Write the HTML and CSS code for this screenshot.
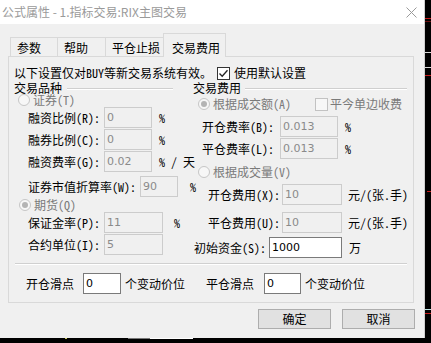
FILE: index.html
```html
<!DOCTYPE html>
<html lang="zh-CN">
<head>
<meta charset="utf-8">
<title>公式属性</title>
<link rel="stylesheet" href="styles.css">
</head>
<body>
<div class="screen">
  <div class="window">
    <div class="titlebar">
      <span class="title">公式属性 - 1.指标交易:RIX主图交易</span>
      <svg class="close" width="11" height="11" viewBox="0 0 11 11"><path d="M0.5 0.5 L10.5 10.5 M10.5 0.5 L0.5 10.5" stroke="#9a9a9a" stroke-width="1" fill="none"/></svg>
    </div>
    <div class="tabs">
      <div class="tab">参数</div>
      <div class="tab">帮助</div>
      <div class="tab">平仓止损</div>
      <div class="tab active">交易费用</div>
    </div>
    <div class="panel">
      <div class="notice">
        <span class="notice-text">以下设置仅对BUY等新交易系统有效。</span>
        <span class="check"><span class="cbox on"><svg width="11" height="11" viewBox="0 0 11 11"><path d="M1.5 5.5 L4.2 8.3 L9.5 2.2" stroke="#222" stroke-width="1.3" fill="none"/></svg></span>使用默认设置</span>
      </div>
      <div class="groups">
        <div class="col left">
          <div class="glabel"><span>交易品种</span><i class="gline gl-left"></i></div>
          <div class="rrow l-r1"><span class="radio"></span><span class="dis">证券(T)</span></div>
          <div class="field l-f1"><span class="lbl lw76">融资比例(R):</span><span class="inp w47">0</span><span class="unit u7">%</span></div>
          <div class="field l-f2"><span class="lbl lw76">融券比例(C):</span><span class="inp w47">0</span><span class="unit u7">%</span></div>
          <div class="field l-f2"><span class="lbl lw76">融资费率(G):</span><span class="inp w47">0.02</span><span class="unit u7">% / 天</span></div>
          <div class="field l-fw"><span class="lbl lw112">证券市值折算率(W):</span><span class="inp w38">90</span><span class="unit u12">%</span></div>
          <div class="rrow l-r2"><span class="radio sel"></span><span class="dis">期货(Q)</span></div>
          <div class="field l-f3"><span class="lbl lw76">保证金率(P):</span><span class="inp w59">11</span><span class="unit u11">%</span></div>
          <div class="field l-f2"><span class="lbl lw76">合约单位(I):</span><span class="inp w59">5</span></div>
        </div>
        <div class="col right">
          <div class="glabel"><span>交易费用</span><i class="gline gl-right"></i></div>
          <div class="rrow r-r1">
            <span class="ritem"><span class="radio sel"></span><span class="dis">根据成交额(A)</span></span>
            <span class="check"><span class="cbox"></span><span class="dis">平今单边收费</span></span>
          </div>
          <div class="field r-f1 p9"><span class="lbl lw78">开仓费率(B):</span><span class="inp w58">0.013</span><span class="unit u7">%</span></div>
          <div class="field r-f2 p9"><span class="lbl lw78">平仓费率(L):</span><span class="inp w58">0.013</span><span class="unit u7">%</span></div>
          <div class="rrow r-r2"><span class="ritem"><span class="radio"></span><span class="dis">根据成交量(V)</span></span></div>
          <div class="field r-f3 p15"><span class="lbl lw74">开仓费用(X):</span><span class="inp w60">10</span><span class="unit u6">元/(张.手)</span></div>
          <div class="field r-f4 p15"><span class="lbl lw74">平仓费用(U):</span><span class="inp w60">10</span><span class="unit u6">元/(张.手)</span></div>
          <div class="field r-f5 p1"><span class="lbl lw75">初始资金(S):</span><span class="inp on w73">1000</span><span class="unit u7">万</span></div>
        </div>
      </div>
      <div class="sep"></div>
      <div class="slip">
        <span class="lbl">开仓滑点</span><span class="inp on w38 s-in">0</span><span class="unit u4">个变动价位</span>
        <span class="lbl s-second">平仓滑点</span><span class="inp on w37 s-in2">0</span><span class="unit u4">个变动价位</span>
      </div>
    </div>
    <div class="buttons">
      <div class="btn">确定</div>
      <div class="btn">取消</div>
    </div>
  </div>
  <div class="edge">
    <i class="ln red e1"></i>
    <i class="ln dred e2"></i>
    <i class="ln wht e3"></i>
    <i class="ln wht e4"></i>
    <i class="ln red e5"></i>
    <i class="ln red e6"></i>
    <i class="ln wht e7"></i>
    <i class="ln red e8"></i>
  </div>
</div>
<div class="bottom">
  <i class="dot"></i>
  <i class="bline"></i>
</div>
</body>
</html>
```

FILE: styles.css
```css
html, body {
  margin: 0;
  padding: 0;
}
body {
  background: #000;
  width: 431px;
  height: 343px;
  overflow: hidden;
  font-family: "Noto Sans Mono CJK SC", "Noto Sans CJK SC", sans-serif;
  font-size: 12px;
  color: #000;
}
.screen {
  display: flex;
  height: 338px;
}
.window {
  width: 425px;
  height: 338px;
  box-sizing: border-box;
  background: #f0f0f0;
  border-right: 1px solid #cfcfcf;
  display: flex;
  flex-direction: column;
}
.titlebar {
  height: 24px;
  flex: none;
  background: #fff;
  display: flex;
  align-items: center;
  justify-content: space-between;
  padding: 0 7px 0 2px;
}
.title {
  font-family: "Noto Sans CJK SC", sans-serif;
  font-size: 12px;
  color: #9a9a9a;
  line-height: 16px;
}
.close {
  display: block;
}
.tabs {
  margin-top: 9px;
  height: 23px;
  display: flex;
  align-items: flex-end;
  padding-left: 10px;
}
.tab {
  box-sizing: border-box;
  min-width: 47px;
  height: 19px;
  padding: 2px 5px 0 6px;
  line-height: 16px;
  border: 1px solid #d9d9d9;
  border-bottom: none;
  border-right: none;
  background: #f0f0f0;
  white-space: nowrap;
}
.tab:nth-child(2) { min-width: 48px; }
.tab:nth-child(3) { min-width: 59px; }
.tab.active {
  position: relative;
  z-index: 1;
  height: 24px;
  margin: 0 -2px -1px -2px;
  padding: 6px 5px 0 8px;
  min-width: 63px;
  border-right: 1px solid #d9d9d9;
  background: #f0f0f0;
}
.panel {
  box-sizing: border-box;
  margin-left: 8px;
  width: 406px;
  height: 247px;
  border: 1px solid #d9d9d9;
  padding: 9px 0 0 5px;
  display: flex;
  flex-direction: column;
}
.notice {
  height: 14px;
  line-height: 12px;
  display: flex;
  align-items: center;
  white-space: nowrap;
}
.notice-text {
  width: 203px;
  flex: none;
}
.check {
  display: flex;
  align-items: center;
  white-space: nowrap;
}
.cbox {
  box-sizing: border-box;
  width: 13px;
  height: 13px;
  border: 1px solid #c2c2c2;
  background: #f7f7f7;
  margin-right: 2px;
  display: flex;
  align-items: center;
  justify-content: center;
  flex: none;
}
.cbox.on {
  border-color: #333;
  background: #fff;
  margin-right: 4px;
}
.groups {
  margin-top: 1px;
  height: 182px;
  display: flex;
  flex: none;
}
.col {
  display: flex;
  flex-direction: column;
}
.col.left { width: 179px; }
.col.right { width: 214px; }
.glabel {
  height: 14px;
  line-height: 12px;
  display: flex;
  align-items: center;
  white-space: nowrap;
}
.gline {
  display: block;
  height: 0;
  border-top: 1px solid #cfcfcf;
  border-bottom: 1px solid #fff;
  margin-left: 5px;
  margin-top: 2px;
}
.gl-left { width: 106px; }
.gl-right { flex: 1; margin-left: 4px; }
.rrow {
  height: 14px;
  line-height: 12px;
  display: flex;
  align-items: center;
  white-space: nowrap;
}
.ritem {
  display: flex;
  align-items: center;
  width: 117px;
  flex: none;
}
.radio {
  box-sizing: border-box;
  width: 12px;
  height: 12px;
  border-radius: 50%;
  border: 1px solid #c6c6c6;
  background: #f7f7f7;
  margin-right: 3px;
  display: flex;
  align-items: center;
  justify-content: center;
  flex: none;
}
.radio.sel::after {
  content: "";
  width: 6px;
  height: 6px;
  border-radius: 50%;
  background: #b4b4b4;
}
.dis { color: #7a7a7a; }
.l-r1 { margin-top: -2px; padding-left: 4px; }
.l-r2 { margin-top: 1px; padding-left: 5px; }
.r-r1 { margin-top: 2px; padding-left: 5px; }
.r-r2 { margin-top: 6px; padding-left: 5px; }
.field {
  height: 21px;
  line-height: 14px;
  display: flex;
  align-items: center;
  white-space: nowrap;
}
.left .field { padding-left: 14px; }
.l-f1 { margin-top: 0; }
.l-f2 { margin-top: 1px; }
.l-fw { margin-top: 4px; }
.l-f3 { margin-top: 0; }
.r-f1 { margin-top: 5px; }
.r-f2 { margin-top: 1px; }
.r-f3 { margin-top: 5px; }
.r-f4 { margin-top: 7px; }
.r-f5 { margin-top: 4px; }
.p1 { padding-left: 1px; }
.p9 { padding-left: 9px; }
.p15 { padding-left: 15px; }
.lbl { flex: none; white-space: nowrap; }
.lw74 { width: 74px; }
.lw75 { width: 75px; }
.lw76 { width: 76px; }
.lw78 { width: 78px; }
.lw112 { width: 112px; }
.inp {
  box-sizing: border-box;
  height: 21px;
  border: 1px solid #cccccc;
  background: #f0f0f0;
  color: #8a8a8a;
  padding-left: 2px;
  line-height: 19px;
  flex: none;
  font-family: "DejaVu Sans", "Liberation Sans", sans-serif;
  font-size: 11px;
}
.inp.on {
  background: #fff;
  border-color: #7a7a7a;
  color: #000;
}
.w37 { width: 37px; }
.w38 { width: 38px; }
.w47 { width: 48px; }
.w58 { width: 58px; }
.w59 { width: 59px; }
.w60 { width: 60px; }
.w73 { width: 73px; }
.unit { white-space: nowrap; }
.u4 { margin-left: 4px; }
.u6 { margin-left: 6px; }
.u7 { margin-left: 7px; }
.u11 { margin-left: 11px; }
.u12 { margin-left: 12px; }
.sep {
  margin-left: 1px;
  width: 392px;
  height: 0;
  border-top: 1px solid #d0d0d0;
  border-bottom: 1px solid #fff;
}
.slip {
  margin-top: 8px;
  height: 21px;
  line-height: 14px;
  display: flex;
  align-items: center;
  padding-left: 12px;
  white-space: nowrap;
}
.s-in { margin-left: 9px; }
.s-second { margin-left: 21px; }
.s-in2 { margin-left: 10px; }
.buttons {
  margin-top: 6px;
  display: flex;
  justify-content: flex-end;
  gap: 11px;
  padding-right: 9px;
}
.btn {
  box-sizing: border-box;
  width: 73px;
  height: 20px;
  border: 1px solid #adadad;
  background: #e1e1e1;
  display: flex;
  align-items: center;
  justify-content: center;
  line-height: 16px;
}
.edge {
  width: 6px;
  display: flex;
  flex-direction: column;
}
.ln {
  display: block;
  height: 1px;
}
.red { background: #c41a1a; }
.dred { background: #6a1010; }
.wht { background: #d8d8d8; }
.e1 { margin-top: 18px; }
.e2 { margin-top: 2px; }
.e3 { margin-top: 30px; }
.e4 { margin-top: 14px; }
.e5 { margin-top: 7px; }
.e6 { margin-top: 115px; margin-left: 2px; }
.e7 { margin-top: 117px; background: #bfe5e5; }
.e8 { margin-top: 3px; }
.bottom {
  height: 5px;
  display: flex;
  align-items: flex-start;
}
.dot {
  display: block;
  width: 2px;
  height: 1px;
  margin-left: 65px;
  background: #c8c860;
}
.bline {
  display: block;
  width: 65px;
  height: 1px;
  margin-left: 61px;
  background: linear-gradient(to right, #777 0 34%, #fff 34% 100%);
}
```
